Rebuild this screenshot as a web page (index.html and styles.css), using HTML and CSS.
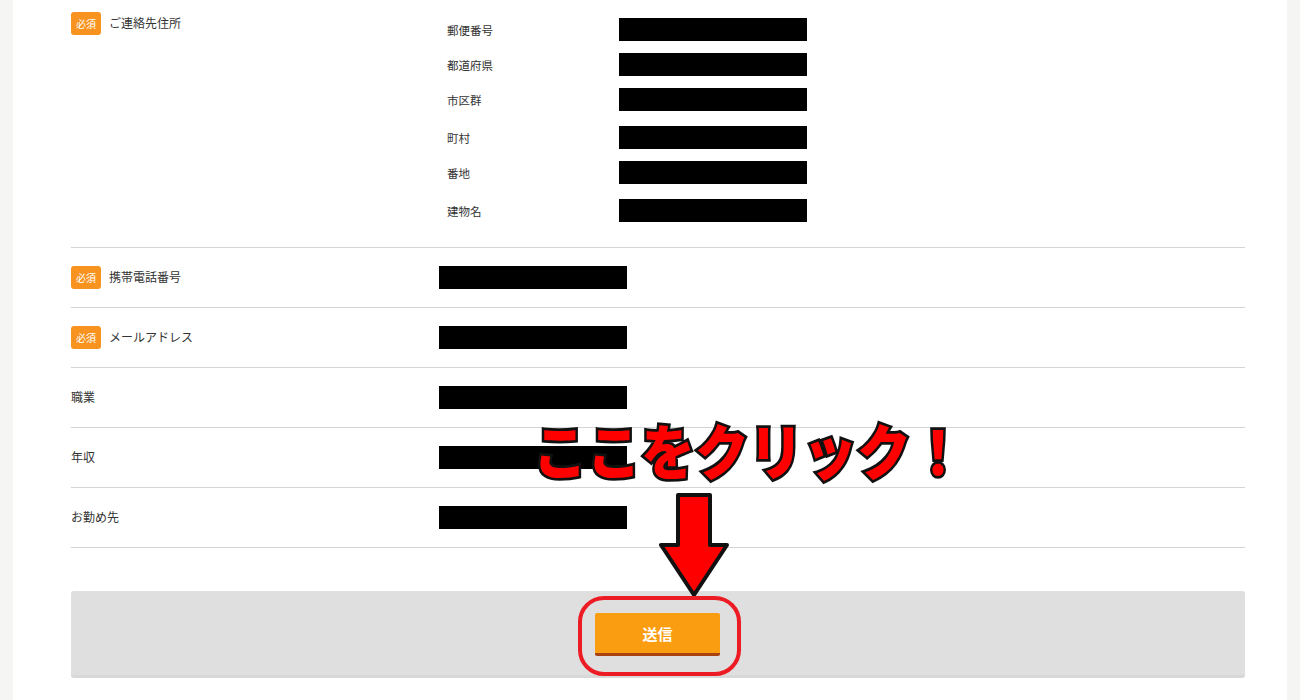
FILE: index.html
```html
<!DOCTYPE html>
<html lang="ja">
<head>
  <meta charset="UTF-8" />
  <title>送信</title>
  <link rel="stylesheet" href="styles.css">
</head>
<body>
  <div class="page">
    <div class="row row-address">
      <div class="head"><span class="req">必須</span><span class="label">ご連絡先住所</span></div>
      <div class="address">
        <div class="sub"><span class="sub-label">郵便番号</span><span class="mask"></span></div>
        <div class="sub"><span class="sub-label">都道府県</span><span class="mask"></span></div>
        <div class="sub sub-gap"><span class="sub-label">市区群</span><span class="mask"></span></div>
        <div class="sub"><span class="sub-label">町村</span><span class="mask"></span></div>
        <div class="sub sub-gap"><span class="sub-label">番地</span><span class="mask"></span></div>
        <div class="sub"><span class="sub-label">建物名</span><span class="mask"></span></div>
      </div>
    </div>
    <div class="row">
      <div class="head"><span class="req">必須</span><span class="label">携帯電話番号</span></div>
      <span class="mask"></span>
    </div>
    <div class="row">
      <div class="head"><span class="req">必須</span><span class="label">メールアドレス</span></div>
      <span class="mask"></span>
    </div>
    <div class="row">
      <div class="head"><span class="label">職業</span></div>
      <span class="mask"></span>
    </div>
    <div class="row">
      <div class="head"><span class="label">年収</span></div>
      <span class="mask"></span>
    </div>
    <div class="row">
      <div class="head"><span class="label">お勤め先</span></div>
      <span class="mask"></span>
    </div>
    <div class="submit-bar">
      <button class="submit" type="button">送信</button>
    </div>

    <!-- annotation drawn over the form -->
    <div class="callout">ここをクリック！</div>
    <svg class="arrow" width="72" height="108" viewBox="0 0 72 108">
      <path d="M19 3H51V53H68L35 103L2 53H19Z" fill="#ff0000" stroke="#111" stroke-width="4" stroke-linejoin="round"/>
    </svg>
    <div class="ring"></div>
  </div>
</body>
</html>
```

FILE: styles.css
```css
html, body {
  margin: 0;
  padding: 0;
  height: 700px;
  overflow: hidden;
}

body {
  background-color: #f5f5f3;
  color: #333;
  font-family: "Noto Sans CJK JP", "Noto Sans", sans-serif;
  font-size: 12px;
}

.page {
  position: relative;
  box-sizing: border-box;
  width: 1274px;
  height: 700px;
  margin: 0 13px;
  padding: 0 42px 0 58px;
  background-color: #fff;
}

.row {
  display: flex;
  align-items: center;
  height: 59px;
  border-bottom: 1px solid #d4d4d4;
}

.row-address {
  align-items: flex-start;
  box-sizing: border-box;
  height: 248px;
  padding-top: 12px;
}

.head {
  display: flex;
  align-items: center;
  flex: 0 0 368px;
}

.label {
  padding-bottom: 2px;
}

.req {
  flex: 0 0 30px;
  height: 23px;
  margin-right: 8px;
  border-radius: 3px;
  background-color: #f7931e;
  color: #fff;
  font-size: 10px;
  line-height: 23px;
  text-align: center;
}

.mask {
  display: block;
  flex: 0 0 188px;
  width: 188px;
  height: 23px;
  background-color: #000;
}

.address {
  margin-top: 6px;
  padding-left: 8px;
}

.sub {
  display: flex;
  align-items: center;
  margin-bottom: 12px;
}

.sub-gap {
  margin-bottom: 15px;
}

.sub-label {
  flex: 0 0 172px;
  font-size: 11.5px;
}

.submit-bar {
  display: flex;
  align-items: center;
  justify-content: center;
  box-sizing: border-box;
  height: 87px;
  margin-top: 43px;
  padding-top: 3px;
  border-bottom: 3px solid #d8d8d8;
  border-radius: 3px;
  background-color: #dfdfdf;
}

.submit {
  box-sizing: border-box;
  width: 125px;
  height: 43px;
  margin-right: 1px;
  border: none;
  border-bottom: 3px solid #a8420f;
  border-radius: 2px;
  background-color: #fb9d10;
  color: #fff;
  font-family: inherit;
  font-size: 15px;
  font-weight: bold;
}

.callout {
  position: absolute;
  top: 405px;
  left: 520px;
  color: #ff0000;
  font-size: 54px;
  font-weight: 900;
  line-height: 88px;
  white-space: nowrap;
  transform: scaleY(1.12);
  -webkit-text-stroke: 5px #111;
  paint-order: stroke fill;
}

.arrow {
  position: absolute;
  top: 492px;
  left: 646px;
}

.ring {
  position: absolute;
  top: 596px;
  left: 565px;
  box-sizing: border-box;
  width: 163px;
  height: 80px;
  border: 4px solid #ed1c24;
  border-radius: 26px;
}
```
